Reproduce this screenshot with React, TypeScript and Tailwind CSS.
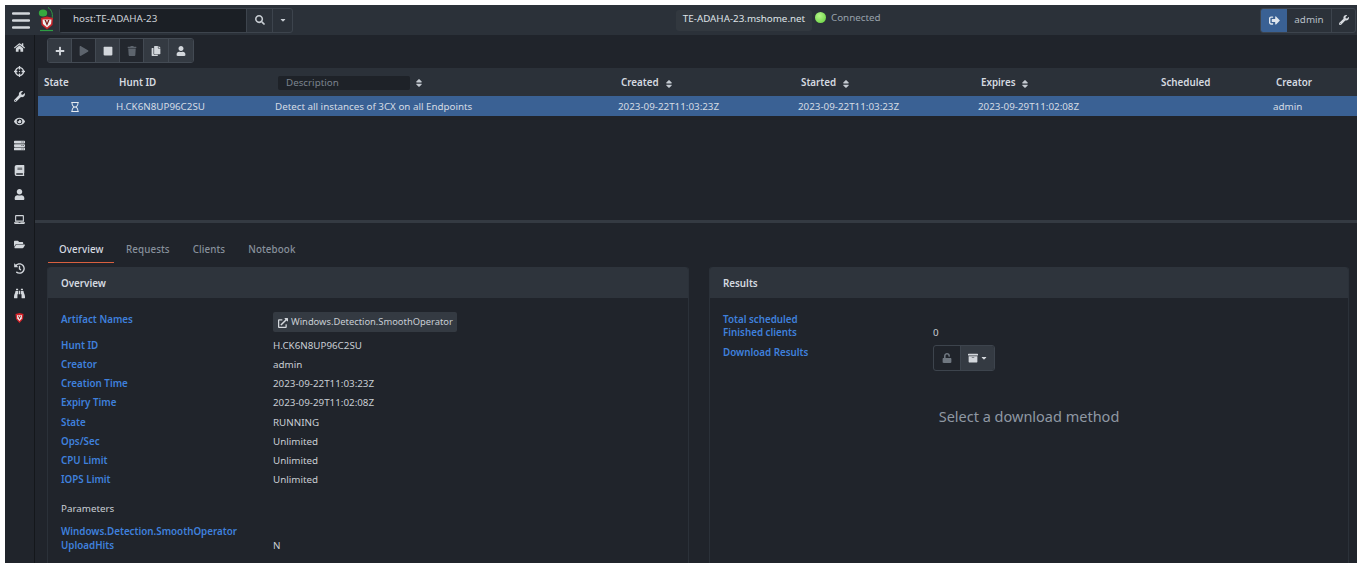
import React from 'react';
import {
  FaArchive, FaBinoculars, FaBook, FaCaretDown, FaCopy, FaCrosshairs, FaExternalLinkAlt, FaEye,
  FaFolderOpen, FaHistory, FaHome, FaLaptop, FaPlay, FaPlus, FaRegHourglass, FaSearch, FaServer,
  FaSignOutAlt, FaSort, FaStop, FaTrash, FaUnlock, FaUser, FaWrench,
} from 'react-icons/fa';

function Logo({ small }: { small?: boolean }) {
  if (small) {
    return (
      <svg width="9" height="10" viewBox="0 0 18 20">
        <path d="M1 2 L9 0 L17 2 L16 12 L9 20 L2 12 Z" fill="#d8232a" />
        <path d="M4 4.5 H14 L13.4 11 L9 16 L4.6 11 Z" fill="#f2f2f2" />
        <path d="M6 5.5 L9 13 L12 5.5 L10.4 5.5 L9 9 L7.6 5.5 Z" fill="#8a1c1c" />
      </svg>
    );
  }
  return (
    <svg width="16" height="26" viewBox="0 0 16 26">
      <path d="M10 0.5 C14 3 15.5 8 13.5 13" fill="none" stroke="#2f9e44" strokeWidth="1" />
      <ellipse cx="5" cy="6" rx="4.2" ry="3.5" fill="#35a83f" />
      <path d="M3 11 L9 9.5 L15 11 L14.5 18 L9 22.5 L3.5 18 Z" fill="#c9252b" />
      <path d="M4.5 12.5 H13.5 L13 17 L9 20.5 L5 17 Z" fill="#f1f1f1" />
      <path d="M6.5 13 L9 19 L11.5 13 L10 13 L9 16 L8 13 Z" fill="#7a1a1a" />
      <path d="M2 23.5 H15" stroke="#2f9e44" strokeWidth="1.2" />
    </svg>
  );
}

const navIcons = [FaHome, FaCrosshairs, FaWrench, FaEye, FaServer, FaBook, FaUser, FaLaptop, FaFolderOpen, FaHistory, FaBinoculars];

const tools = [
  { icon: FaPlus, on: true, w: 'w-[24px]' },
  { icon: FaPlay, on: false, w: 'w-[24px]' },
  { icon: FaStop, on: true, w: 'w-[24px]' },
  { icon: FaTrash, on: false, w: 'w-[24px]' },
  { icon: FaCopy, on: true, w: 'w-[25px]' },
  { icon: FaUser, on: true, w: 'w-[24px]' },
];

const overview = [
  ['Hunt ID', 'H.CK6N8UP96C2SU'],
  ['Creator', 'admin'],
  ['Creation Time', '2023-09-22T11:03:23Z'],
  ['Expiry Time', '2023-09-29T11:02:08Z'],
  ['State', 'RUNNING'],
  ['Ops/Sec', 'Unlimited'],
  ['CPU Limit', 'Unlimited'],
  ['IOPS Limit', 'Unlimited'],
];

const cols = 'grid grid-cols-[78px_159px_343px_180px_180px_180px_115px_84px]';

function Head({ children, sort }: { children: React.ReactNode; sort?: boolean }) {
  return (
    <div className="flex items-center gap-[5px] pl-[3px] pt-[3px] font-semibold text-[#d5dae0]">
      {children}
      {sort && <FaSort size={10} className="text-[#c4cad1]" />}
    </div>
  );
}

function Label({ children }: { children: React.ReactNode }) {
  return <div className="font-semibold text-[#3f80dc]">{children}</div>;
}

export default function App() {
  return (
    <div className="w-[1364px] h-[570px] bg-white pt-[5px] pl-[5px] pr-[7px] pb-[7px] overflow-hidden">
      <div className="h-[558px] flex flex-col bg-[#20242b] text-[9.8px] text-[#c3c9d0] overflow-hidden font-['Noto_Sans',sans-serif]">
        <header className="h-[30px] shrink-0 bg-[#2b3139] flex items-center relative">
          <svg width="18" height="17" viewBox="0 0 18 17" className="ml-[7px] mt-[1px]">
            <path d="M1 1.5 H17 M1 8.5 H17 M1 15.5 H17" stroke="#d3d7dc" strokeWidth="2.4" strokeLinecap="round" />
          </svg>
          <div className="ml-[8px] w-[16px] flex"><Logo /></div>
          <div className="ml-[5px] flex h-[25px] w-[234px] rounded-[3px] border border-[#3d444d]">
            <div className="w-[186px] bg-[#1b1f25] pl-[13px] pb-[1px] flex items-center text-[#cfd4da]">host:TE-ADAHA-23</div>
            <div className="w-[26px] flex items-center justify-center border-l border-[#3d444d]"><FaSearch size={10} className="text-[#c7ccd2]" /></div>
            <div className="flex-1 flex items-center justify-center border-l border-[#3d444d]"><FaCaretDown size={8} className="text-[#c7ccd2]" /></div>
          </div>
          <div className="ml-[383px] h-[21px] w-[136px] pb-[1px] rounded-[3px] bg-[#32383f] flex items-center justify-center text-[#dfe3e7]">TE-ADAHA-23.mshome.net</div>
          <div className="ml-[3px] w-[11px] h-[11px] mb-[5px] rounded-full bg-[radial-gradient(circle_at_40%_35%,#b6f58a,#5fcf3a)]" />
          <div className="ml-[5px] mb-[3px] text-[#98a1ab]">Connected</div>
          <div className="ml-auto mr-[1px] flex h-[25px] w-[96px] rounded-[3px] border border-[#3d444d] overflow-hidden">
            <div className="w-[26px] bg-[#3a6194] flex items-center justify-center"><FaSignOutAlt size={11} className="text-[#dfe6ee]" /></div>
            <div className="w-[44px] flex items-center justify-center text-[#b9c0c8]">admin</div>
            <div className="flex-1 border-l border-[#3d444d] flex items-center justify-center"><FaWrench size={10} className="text-[#d5d9de]" /></div>
          </div>
        </header>

        <div className="flex-1 flex min-h-0">
          <nav className="w-[30px] shrink-0 border-r border-[#14171b] flex flex-col items-center pr-[1px]">
            {navIcons.map((Icon, i) => (
              <div key={i} className="h-[24.6px] flex items-center justify-center"><Icon size={11} className="text-[#d3d7dc]" /></div>
            ))}
            <div className="h-[24.6px] flex items-center justify-center"><Logo small /></div>
          </nav>

          <main className="flex-1 min-w-0 flex flex-col">
            <div className="h-[33px] shrink-0 pl-[12px] pt-[3px]">
              <div className="flex w-fit h-[25px] rounded-[3px] border border-[#434a53] overflow-hidden">
                {tools.map((t, i) => (
                  <div key={i} className={`${t.w} flex items-center justify-center border-r border-[#434a53] last:border-r-0 ${t.on ? 'bg-[#343a42] text-[#d3d7dc]' : 'bg-[#23272e] text-[#5d646d]'}`}>
                    <t.icon size={10} />
                  </div>
                ))}
              </div>
            </div>

            <div className="pl-[3px]">
              <div className={`${cols} h-[28px] bg-[#2b3139] items-center`}>
                <Head><span className="pl-[3px]">State</span></Head>
                <Head>Hunt ID</Head>
                <div className="flex items-center pt-[2px]">
                  <div className="ml-[3px] w-[132px] h-[14px] rounded-[2px] bg-[#1e2228] pl-[8px] flex items-center text-[#7b838d]">Description</div>
                  <FaSort size={10} className="ml-[4px] text-[#c4cad1]" />
                </div>
                <Head sort>Created</Head>
                <Head sort>Started</Head>
                <Head sort>Expires</Head>
                <Head>Scheduled</Head>
                <Head>Creator</Head>
              </div>
              <div className={`${cols} h-[20px] pt-[2px] bg-[#3a6194] items-center text-[#d5dce4]`}>
                <div className="flex justify-center pr-[4px]"><FaRegHourglass size={10} className="text-[#e6ebf0]" /></div>
                <div>H.CK6N8UP96C2SU</div>
                <div>Detect all instances of 3CX on all Endpoints</div>
                <div>2023-09-22T11:03:23Z</div>
                <div>2023-09-22T11:03:23Z</div>
                <div>2023-09-29T11:02:08Z</div>
                <div />
                <div>admin</div>
              </div>
            </div>

            <div className="mt-[104px] h-[3px] shrink-0 bg-[#343a42]" />

            <div className="flex h-[23px] mt-[17px] ml-[13px] shrink-0 font-medium tracking-[0.1px]">
              <div className="w-[66px] border-b-[1.5px] border-[#d9603f] pl-[11px] pt-[3px] text-[#d5dae0]">Overview</div>
              <div className="ml-[12px] pt-[3px] text-[#87909b]">Requests</div>
              <div className="ml-[23px] pt-[3px] text-[#87909b]">Clients</div>
              <div className="ml-[23px] pt-[3px] text-[#87909b]">Notebook</div>
            </div>

            <div className="flex gap-[20px] ml-[12px] mr-[8px] mt-[4px] min-h-0 flex-1">
              <section className="w-[642px] shrink-0 h-[400px] rounded-t-[3px] border-x border-[#2b3139]">
                <div className="h-[31px] pt-[3px] bg-[#2e343c] rounded-t-[3px] pl-[13px] flex items-center font-semibold text-[#d5dae0]">Overview</div>
                <div className="px-[13px]">
                  <div className="grid grid-cols-[212px_1fr] pt-[14px] h-[36px]">
                    <div className="pt-[1px]"><Label>Artifact Names</Label></div>
                    <div className="flex w-[184px] h-[20px] pt-[1px] items-center rounded-[2px] bg-[#343a42] pl-[5px] text-[9.35px] text-[#c9ced4]">
                      <FaExternalLinkAlt size={10} className="mr-[3px] shrink-0 text-[#d3d7dc]" />
                      Windows.Detection.SmoothOperator
                    </div>
                  </div>
                  <div className="mt-[3px]">
                    {overview.map(([k, v]) => (
                      <div key={k} className="grid grid-cols-[212px_1fr] h-[19.1px] items-center">
                        <Label>{k}</Label>
                        <div className="text-[#c9ced4]">{v}</div>
                      </div>
                    ))}
                  </div>
                  <div className="mt-[10px] h-[19px] flex items-center text-[#c9ced4]">Parameters</div>
                  <div className="mt-[7px] h-[13px] flex items-center"><Label>Windows.Detection.SmoothOperator</Label></div>
                  <div className="grid grid-cols-[212px_1fr] h-[14px] items-center">
                    <Label>UploadHits</Label>
                    <div className="text-[#c9ced4]">N</div>
                  </div>
                </div>
              </section>

              <section className="flex-1 h-[400px] rounded-t-[3px] border-x border-[#2b3139]">
                <div className="h-[31px] pt-[3px] bg-[#2e343c] rounded-t-[3px] pl-[13px] flex items-center font-semibold text-[#d5dae0]">Results</div>
                <div className="px-[13px] pt-[14px]">
                  <div className="h-[14px] pt-[3px] flex items-center"><Label>Total scheduled</Label></div>
                  <div className="grid grid-cols-[210px_1fr] h-[14px] items-center">
                    <Label>Finished clients</Label>
                    <div className="text-[#c9ced4]">0</div>
                  </div>
                  <div className="grid grid-cols-[210px_1fr] mt-[5px]">
                    <div className="pt-[1px]"><Label>Download Results</Label></div>
                    <div className="flex w-[62px] h-[26px] rounded-[3px] border border-[#3d444d] overflow-hidden">
                      <div className="w-[27px] flex items-center justify-center border-r border-[#3d444d]"><FaUnlock size={10} className="text-[#6f7780]" /></div>
                      <div className="flex-1 bg-[#343a42] flex items-center justify-center gap-[2px] text-[#d3d7dc]"><FaArchive size={10} /><FaCaretDown size={8} /></div>
                    </div>
                  </div>
                  <div className="mt-[35px] text-center text-[14.5px] text-[#8f98a3]">Select a download method</div>
                </div>
              </section>
            </div>
          </main>
        </div>
      </div>
    </div>
  );
}
